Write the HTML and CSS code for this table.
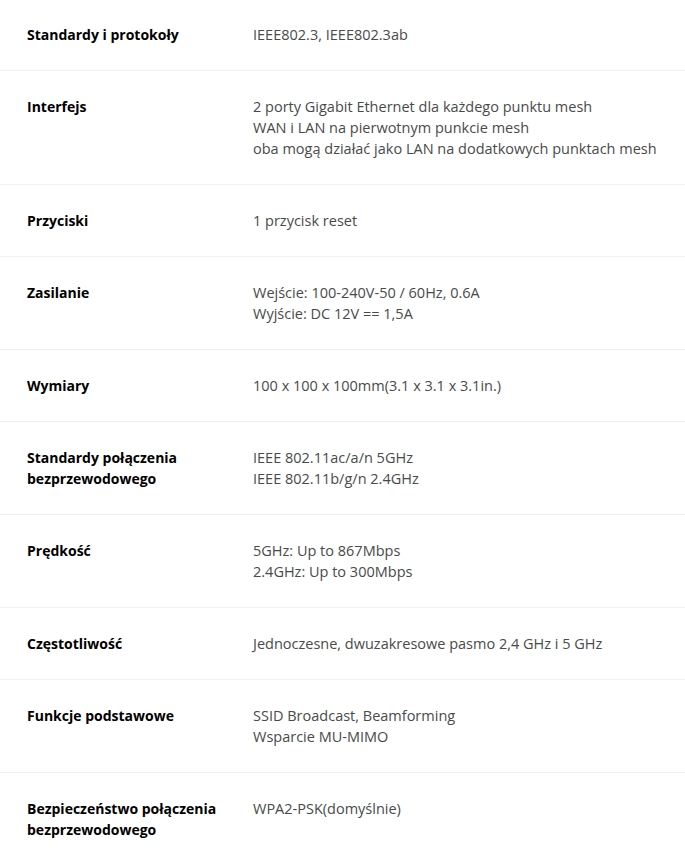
FILE: index.html
```html
<!DOCTYPE html>
<html lang="pl">
<head>
<meta charset="utf-8">
<link rel="stylesheet" href="styles.css">
</head>
<body>
<div class="spec">
  <div class="row"><div class="label">Standardy i protokoły</div><div class="value">IEEE802.3, IEEE802.3ab</div></div>
  <div class="row"><div class="label">Interfejs</div><div class="value">2 porty Gigabit Ethernet dla każdego punktu mesh<br>WAN i LAN na pierwotnym punkcie mesh<br>oba mogą działać jako LAN na dodatkowych punktach mesh</div></div>
  <div class="row"><div class="label">Przyciski</div><div class="value">1 przycisk reset</div></div>
  <div class="row"><div class="label">Zasilanie</div><div class="value">Wejście: 100-240V-50 / 60Hz, 0.6A<br>Wyjście: DC 12V == 1,5A</div></div>
  <div class="row"><div class="label">Wymiary</div><div class="value">100 x 100 x 100mm(3.1 x 3.1 x 3.1in.)</div></div>
  <div class="row"><div class="label">Standardy połączenia<br>bezprzewodowego</div><div class="value">IEEE 802.11ac/a/n 5GHz<br>IEEE 802.11b/g/n 2.4GHz</div></div>
  <div class="row"><div class="label">Prędkość</div><div class="value">5GHz: Up to 867Mbps<br>2.4GHz: Up to 300Mbps</div></div>
  <div class="row"><div class="label">Częstotliwość</div><div class="value">Jednoczesne, dwuzakresowe pasmo 2,4 GHz i 5 GHz</div></div>
  <div class="row"><div class="label">Funkcje podstawowe</div><div class="value">SSID Broadcast, Beamforming<br>Wsparcie MU-MIMO</div></div>
  <div class="row"><div class="label">Bezpieczeństwo połączenia<br>bezprzewodowego</div><div class="value">WPA2-PSK(domyślnie)</div></div>
</div>
</body>
</html>
```

FILE: styles.css
```css
html, body {
  margin: 0;
  padding: 0;
  background: #fff;
}
body {
  font-family: "Open Sans", "Noto Sans", sans-serif;
  font-size: 14px;
  line-height: 21px;
}
.spec {
  display: flex;
  flex-direction: column;
  margin-top: -1px;
}
.row {
  display: grid;
  grid-template-columns: 253px 1fr;
  padding: 25px 0;
  border-bottom: 1px solid #efefef;
}
.label {
  padding-left: 27px;
  font-weight: 700;
  color: #000;
}
.value {
  font-size: 14.5px;
  color: #4a4a4a;
}
```
